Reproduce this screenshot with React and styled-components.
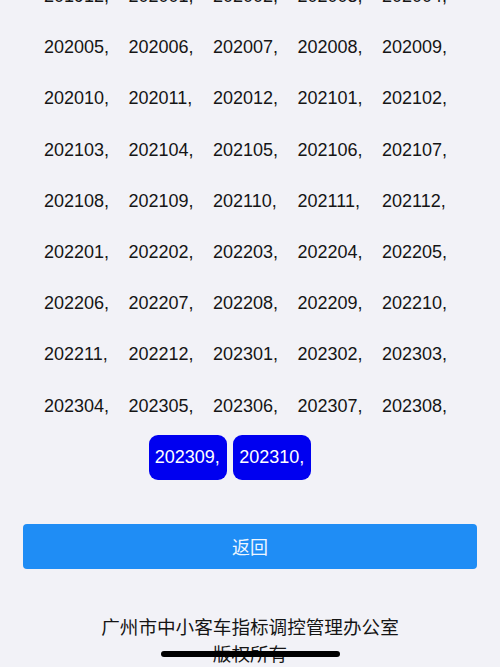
import React from 'react';
import styled, { createGlobalStyle } from 'styled-components';

const GlobalStyle = createGlobalStyle`
  html, body {
    margin: 0;
    padding: 0;
    background: #f2f2f7;
  }
  body {
    font-family: "Liberation Sans", "Noto Sans CJK SC", sans-serif;
    color: #151515;
    overflow: hidden;
  }
`;

const Page = styled.div`
  height: 667px;
  overflow: hidden;
  padding: 0 23px;
  box-sizing: border-box;
`;

const List = styled.div`
  margin-top: -26px;
  padding-right: 8px;
  display: flex;
  flex-direction: column;
  gap: 6.2px;
`;

const Row = styled.div`
  display: flex;
  justify-content: center;
  gap: 6.5px;
  padding-right: ${p => p.$shift || 0}px;
`;

const Period = styled.span`
  box-sizing: border-box;
  width: 78px;
  height: 45px;
  padding: 0 6px;
  display: flex;
  align-items: center;
  font-size: 18px;
  white-space: nowrap;
  border-radius: 9px;
  background: ${p => (p.$active ? '#0000f0' : 'transparent')};
  color: ${p => (p.$active ? '#ffffff' : '#151515')};
`;

const BackButton = styled.button`
  display: block;
  width: 100%;
  height: 45px;
  margin-top: 44px;
  border: none;
  border-radius: 4px;
  background: #1f8df5;
  color: #eef6ff;
  font-family: "Noto Sans CJK SC", sans-serif;
  font-size: 18px;
  cursor: pointer;
`;

const Footer = styled.div`
  margin-top: 43px;
  text-align: center;
  font-family: "Noto Sans CJK SC", sans-serif;
  font-size: 18.6px;
  line-height: 27px;
  color: #151515;
`;

const HomeIndicator = styled.div`
  position: fixed;
  left: 50%;
  bottom: 10px;
  width: 179px;
  height: 6px;
  margin-left: -89.5px;
  border-radius: 3px;
  background: #000;
`;

const periods = [
  '201912', '202001', '202002', '202003', '202004',
  '202005', '202006', '202007', '202008', '202009',
  '202010', '202011', '202012', '202101', '202102',
  '202103', '202104', '202105', '202106', '202107',
  '202108', '202109', '202110', '202111', '202112',
  '202201', '202202', '202203', '202204', '202205',
  '202206', '202207', '202208', '202209', '202210',
  '202211', '202212', '202301', '202302', '202303',
  '202304', '202305', '202306', '202307', '202308',
  '202309', '202310',
];

const selected = ['202309', '202310'];

function chunk(arr, size) {
  const out = [];
  for (let i = 0; i < arr.length; i += size) out.push(arr.slice(i, i + size));
  return out;
}

export default function App() {
  const rows = chunk(periods, 5);
  return (
    <Page>
      <GlobalStyle />
      <List>
        {rows.map((row, i) => (
          <Row key={i} $shift={row.length < 5 ? 32 : 0}>
            {row.map(p => (
              <Period key={p} $active={selected.includes(p)}>{p},</Period>
            ))}
          </Row>
        ))}
      </List>
      <BackButton>返回</BackButton>
      <Footer>
        <div>广州市中小客车指标调控管理办公室</div>
        <div>版权所有</div>
      </Footer>
      <HomeIndicator />
    </Page>
  );
}
